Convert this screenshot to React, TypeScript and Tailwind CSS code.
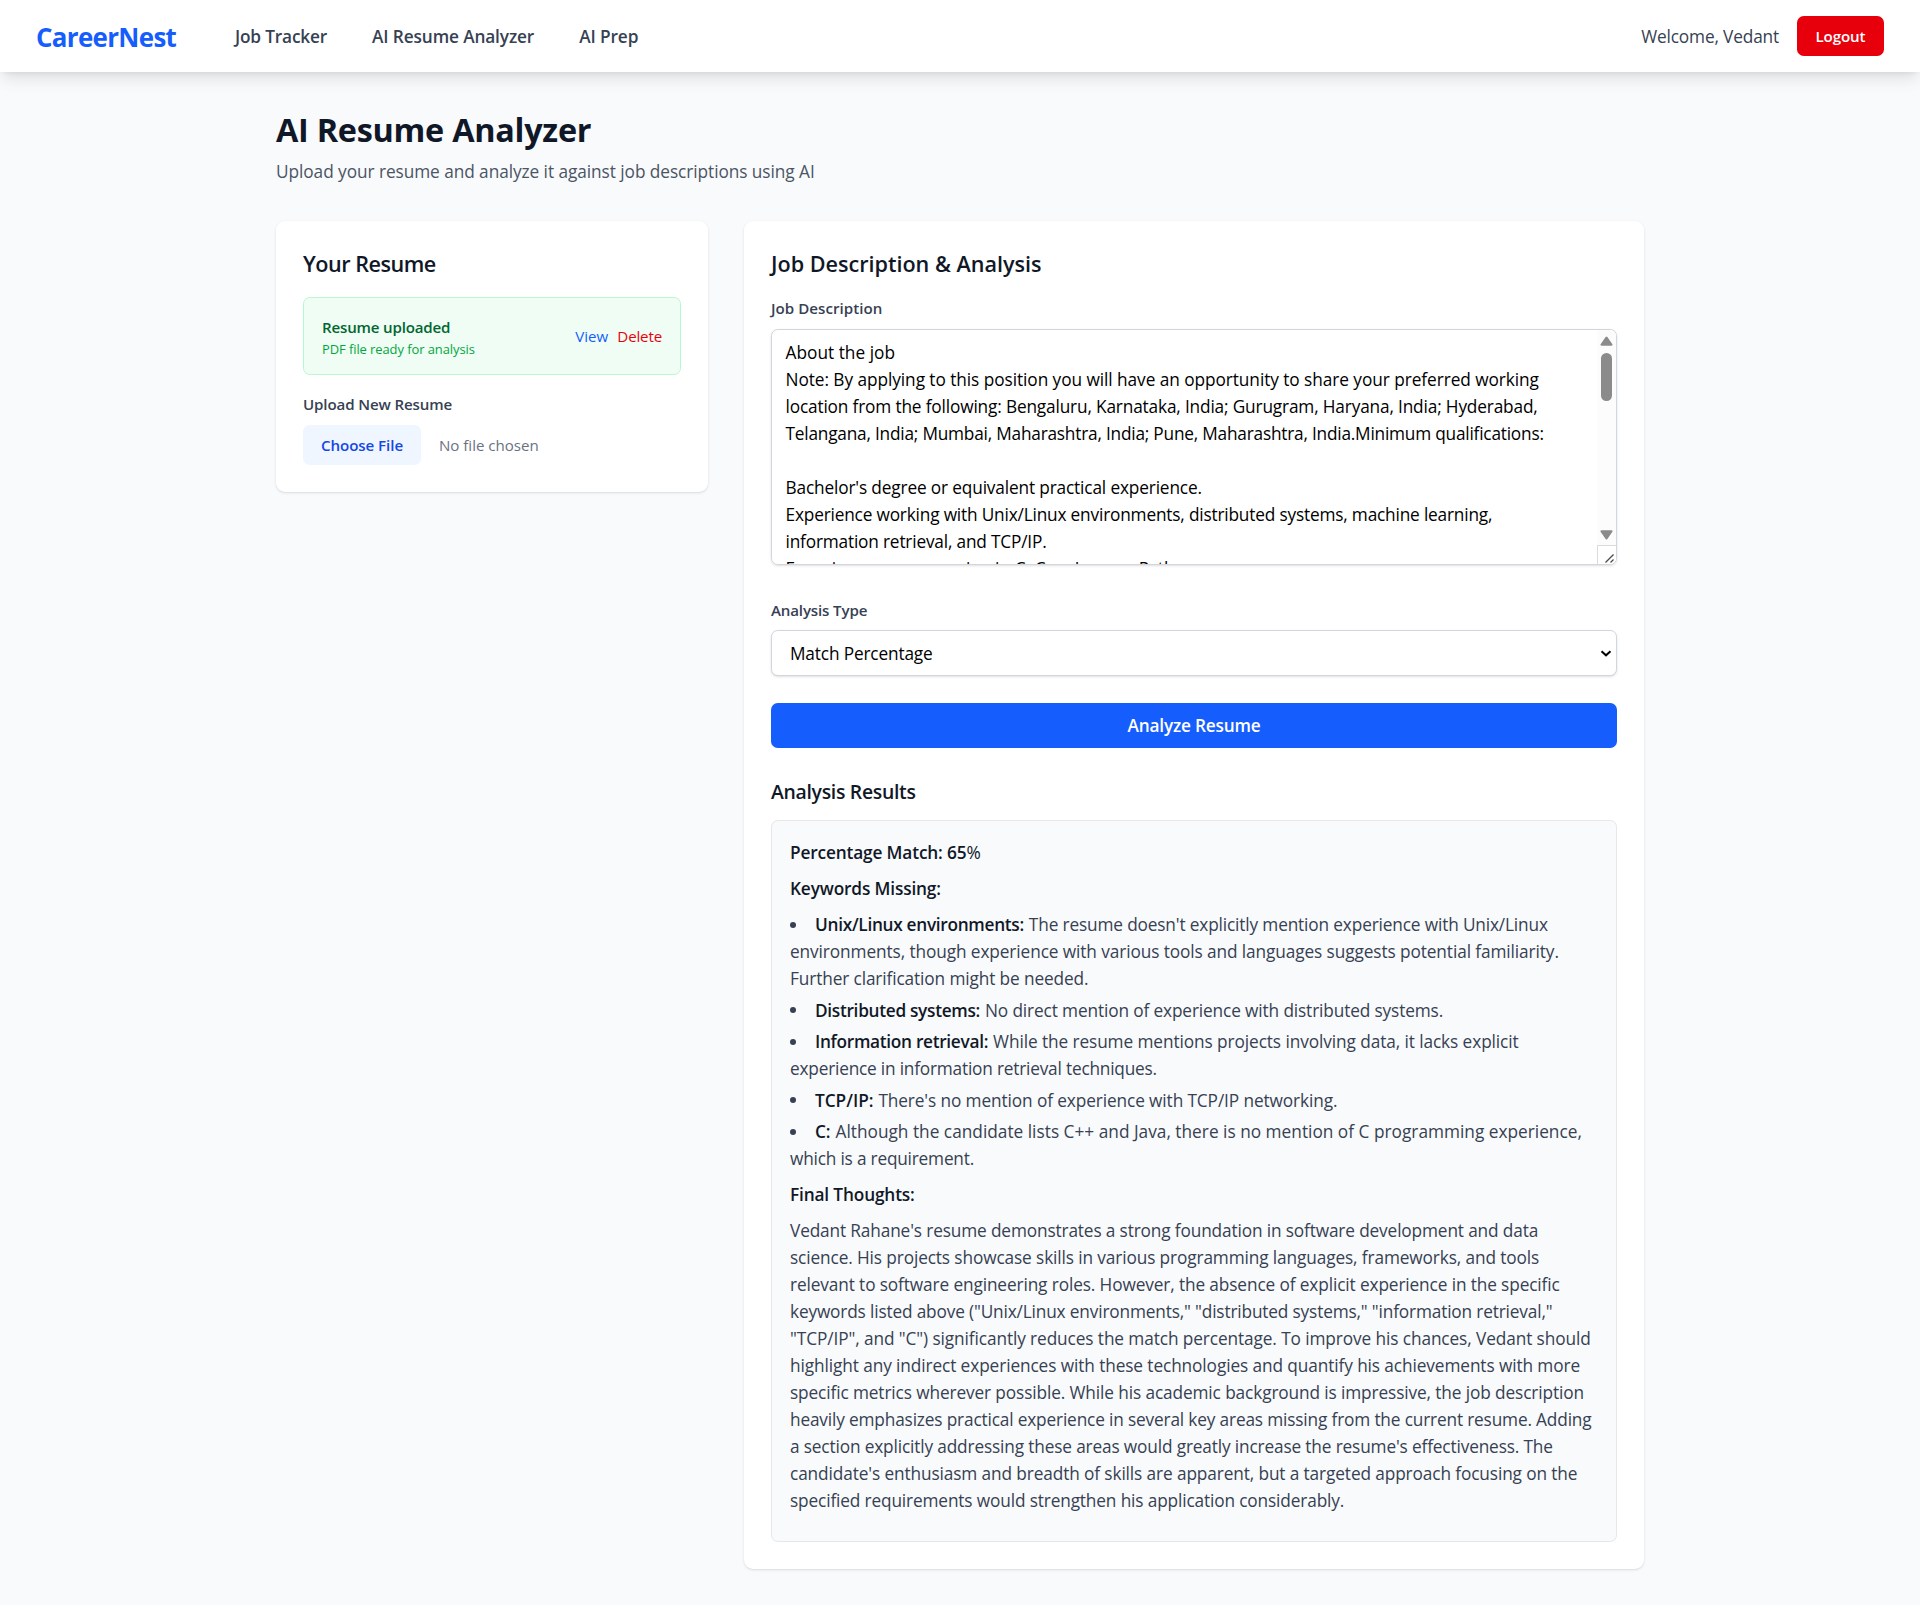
import React from "react";

type Line = { text: string; className?: string };

const NAV_LINKS: Line[] = [
  { text: "Job Tracker", className: "tracking-[-0.17px]" },
  { text: "AI Resume Analyzer", className: "tracking-[-0.13px]" },
  { text: "AI Prep", className: "tracking-[-0.1px]" },
];

const JOB_DESCRIPTION: Line[] = [
  { text: "About the job", className: "tracking-[0.02px]" },
  { text: "Note: By applying to this position you will have an opportunity to share your preferred working", className: "tracking-[-0.06px]" },
  { text: "location from the following: Bengaluru, Karnataka, India; Gurugram, Haryana, India; Hyderabad,", className: "tracking-[-0.16px]" },
  { text: "Telangana, India; Mumbai, Maharashtra, India; Pune, Maharashtra, India.Minimum qualifications:", className: "tracking-[-0.21px]" },
  { text: "" },
  { text: "Bachelor's degree or equivalent practical experience." },
  { text: "Experience working with Unix/Linux environments, distributed systems, machine learning,", className: "tracking-[-0.18px]" },
  { text: "information retrieval, and TCP/IP.", className: "tracking-[-0.18px]" },
  { text: "Experience programming in C, C++, Java, or Python.", className: "tracking-[0.08px]" },
];

const MISSING_KEYWORDS: { term: Line; lines: Line[] }[] = [
  {
    term: { text: "Unix/Linux environments:", className: "tracking-[-0.3px]" },
    lines: [
      { text: "The resume doesn't explicitly mention experience with Unix/Linux" },
      { text: "environments, though experience with various tools and languages suggests potential familiarity.", className: "tracking-[-0.1px]" },
      { text: "Further clarification might be needed.", className: "tracking-[-0.12px]" },
    ],
  },
  {
    term: { text: "Distributed systems:", className: "tracking-[-0.3px]" },
    lines: [{ text: "No direct mention of experience with distributed systems.", className: "tracking-[-0.13px]" }],
  },
  {
    term: { text: "Information retrieval:", className: "tracking-[-0.3px]" },
    lines: [
      { text: "While the resume mentions projects involving data, it lacks explicit", className: "tracking-[-0.09px]" },
      { text: "experience in information retrieval techniques.", className: "tracking-[-0.2px]" },
    ],
  },
  {
    term: { text: "TCP/IP:", className: "tracking-[-0.03px]" },
    lines: [{ text: "There's no mention of experience with TCP/IP networking.", className: "tracking-[-0.11px]" }],
  },
  {
    term: { text: "C:", className: "tracking-[-0.1px]" },
    lines: [
      { text: "Although the candidate lists C++ and Java, there is no mention of C programming experience,", className: "tracking-[0.01px]" },
      { text: "which is a requirement.", className: "tracking-[-0.2px]" },
    ],
  },
];

const FINAL_THOUGHTS: Line[] = [
  { text: "Vedant Rahane's resume demonstrates a strong foundation in software development and data", className: "tracking-[-0.14px]" },
  { text: "science. His projects showcase skills in various programming languages, frameworks, and tools", className: "tracking-[-0.12px]" },
  { text: "relevant to software engineering roles. However, the absence of explicit experience in the specific", className: "tracking-[-0.12px]" },
  { text: "keywords listed above (\"Unix/Linux environments,\" \"distributed systems,\" \"information retrieval,\"", className: "tracking-[-0.16px]" },
  { text: "\"TCP/IP\", and \"C\") significantly reduces the match percentage. To improve his chances, Vedant should", className: "tracking-[-0.1px]" },
  { text: "highlight any indirect experiences with these technologies and quantify his achievements with more", className: "tracking-[-0.1px]" },
  { text: "specific metrics wherever possible. While his academic background is impressive, the job description", className: "tracking-[-0.115px]" },
  { text: "heavily emphasizes practical experience in several key areas missing from the current resume. Adding", className: "tracking-[-0.16px]" },
  { text: "a section explicitly addressing these areas would greatly increase the resume's effectiveness. The" },
  { text: "candidate's enthusiasm and breadth of skills are apparent, but a targeted approach focusing on the", className: "tracking-[-0.115px]" },
  { text: "specified requirements would strengthen his application considerably.", className: "tracking-[-0.14px]" },
];

function Header() {
  return (
    <nav className="relative flex h-16 items-center justify-between bg-white px-8 shadow-lg">
      <div className="flex items-center">
        <a className="w-[145px] pt-[2px] text-[25.9px] leading-[34px] font-bold tracking-[-0.65px] text-blue-600">CareerNest</a>
        <div className="ml-[54px] flex gap-10">
          {NAV_LINKS.map((link) => (
            <a key={link.text} className={`font-semibold whitespace-nowrap text-gray-700 ${link.className}`}>
              {link.text}
            </a>
          ))}
        </div>
      </div>
      <div className="flex items-center gap-4">
        <span className="text-gray-700">Welcome, Vedant</span>
        <button className="h-[40px] w-[87px] rounded-md bg-[#e7000b] text-sm font-semibold tracking-[-0.1px] text-white">Logout</button>
      </div>
    </nav>
  );
}

function ResumeCard() {
  return (
    <section className="rounded-lg bg-white p-6 shadow-sm">
      <h2 className="mb-4 text-xl font-semibold tracking-[-0.48px] text-gray-900">Your Resume</h2>
      <div className="mb-4 flex h-[77.5px] items-center justify-between rounded-md border border-green-200 bg-green-50 px-4">
        <div className="pt-[2px]">
          <p className="text-sm font-semibold tracking-[-0.18px] text-green-800">Resume uploaded</p>
          <p className="pt-px text-xs tracking-[-0.07px] text-green-600">PDF file ready for analysis</p>
        </div>
        <div className="flex gap-2 text-sm">
          <button className="tracking-[0.05px] text-blue-600">View</button>
          <button className="text-red-600">Delete</button>
        </div>
      </div>
      <label className="mb-[10px] block text-sm font-semibold tracking-[-0.13px] text-gray-700">Upload New Resume</label>
      <div className="flex items-center gap-4 text-sm">
        <button className="h-[40px] w-[118px] rounded-md bg-blue-50 font-semibold tracking-[-0.05px] text-blue-700">Choose File</button>
        <span className="tracking-[-0.02px] text-gray-500">No file chosen</span>
      </div>
    </section>
  );
}

function ScrollArrow({ className }: { className: string }) {
  return (
    <svg className={`h-[10px] w-[13px] ${className}`} viewBox="0 0 13 10">
      <path d="M5.6 1.1a1.1 1.1 0 0 1 1.8 0l5 7.1q.6 1.3-.9 1.5H1.5Q0 9.5.6 8.2z" fill="#8b8b8b" />
    </svg>
  );
}

function Scrollbar() {
  return (
    <div className="absolute inset-y-0 right-0 flex w-[19px] flex-col items-center bg-[#fcfcfc]">
      <ScrollArrow className="mt-[6px]" />
      <div className="mt-[7px] h-[48px] w-[11px] rounded-full bg-[#8b8b8b]" />
      <ScrollArrow className="mt-auto mb-[5px] rotate-180" />
      <div className="flex h-[19px] w-full shrink-0 items-end justify-end border-t border-l border-[#d9dbde] bg-white">
        <svg className="mr-[2px] mb-px h-[9px] w-[9px]" viewBox="0 0 9 9" fill="none" stroke="#4a4a4a" strokeWidth="1.3">
          <path d="M0.5 8.5 8.5 0.5M5.5 8.5 8.5 5.5" />
        </svg>
      </div>
    </div>
  );
}

function AnalysisResults() {
  return (
    <div>
      <h3 className="mb-3 h-7 pt-px text-lg font-semibold tracking-[-0.3px] text-gray-900">Analysis Results</h3>
      <div className="h-[722px] rounded-md border border-gray-200 bg-gray-50 p-4 whitespace-nowrap text-gray-700">
        <p className="mb-2 font-semibold tracking-[-0.15px] text-gray-900">
          Percentage Match: 65<span className="font-medium">%</span>
        </p>
        <p className="mb-2 font-semibold tracking-[-0.15px] text-gray-900">Keywords Missing:</p>
        <ul className="mb-2 flex flex-col gap-1">
          {MISSING_KEYWORDS.map(({ term, lines }) => (
            <li key={term.text}>
              <div className="flex items-center">
                <span className="mr-[19px] size-[6px] rounded-full bg-gray-700" />
                <strong className={`mr-[5px] font-semibold text-gray-900 ${term.className ?? ""}`}>{term.text}</strong>
                <span className={lines[0].className}>{lines[0].text}</span>
              </div>
              {lines.slice(1).map((line) => (
                <div key={line.text} className={line.className}>{line.text}</div>
              ))}
            </li>
          ))}
        </ul>
        <p className="mb-2 font-semibold tracking-[-0.15px] text-gray-900">Final Thoughts:</p>
        {FINAL_THOUGHTS.map((line) => (
          <div key={line.text} className={line.className}>{line.text}</div>
        ))}
      </div>
    </div>
  );
}

function AnalysisCard() {
  return (
    <section className="col-span-2 rounded-lg bg-white p-6 shadow-sm">
      <h2 className="mb-4 text-xl font-semibold tracking-[-0.01px] text-gray-900">Job Description &amp; Analysis</h2>
      <label className="mb-2 block text-sm font-semibold tracking-[0.04px] text-gray-700">Job Description</label>
      <div className="relative mb-[34px] h-[236px] overflow-hidden rounded-md border border-gray-300 px-3 py-2 whitespace-nowrap text-black shadow-sm">
        {JOB_DESCRIPTION.map((line, i) => (
          <div key={i} className={`h-6 ${line.className ?? ""}`}>{line.text}</div>
        ))}
        <Scrollbar />
      </div>
      <label className="mb-2 block text-sm font-semibold tracking-[-0.15px] text-gray-700">Analysis Type</label>
      <div className="mb-6 flex h-[46px] items-center justify-between rounded-md border border-gray-300 bg-white pr-[4px] pl-[18px] text-black shadow-sm">
        Match Percentage
        <svg className="h-[7px] w-[12px]" viewBox="0 0 12 7" fill="none" stroke="#000" strokeWidth="2">
          <path d="M1.5 1.2 6 5.3l4.5-4.1" />
        </svg>
      </div>
      <button className="mb-6 block h-10 w-full rounded-md bg-blue-600 font-semibold tracking-[-0.2px] text-white">Analyze Resume</button>
      <AnalysisResults />
    </section>
  );
}

export default function App() {
  return (
    <div className="min-h-[1605px] bg-gray-50 font-['Open_Sans',sans-serif] text-base tracking-[-0.15px] [--radius-lg:9px] [--radius-md:6.75px] [--spacing:4.5px] [--text-base--line-height:27px] [--text-base:17.25px] [--text-lg--line-height:31.5px] [--text-lg:19.4px] [--text-sm--line-height:22.5px] [--text-sm:15.1px] [--text-xl--line-height:31.5px] [--text-xl:21.6px] [--text-xs--line-height:18px] [--text-xs:12.95px]">
      <Header />
      <main className="mx-auto max-w-[1440px] px-8 py-8">
        <h1 className="h-9 pt-px text-[32.4px] leading-[40.5px] font-bold tracking-[-0.26px] text-gray-900">AI Resume Analyzer</h1>
        <p className="mt-2 mb-8 tracking-[-0.06px] text-gray-600">Upload your resume and analyze it against job descriptions using AI</p>
        <div className="grid grid-cols-3 items-start gap-8">
          <ResumeCard />
          <AnalysisCard />
        </div>
      </main>
    </div>
  );
}
